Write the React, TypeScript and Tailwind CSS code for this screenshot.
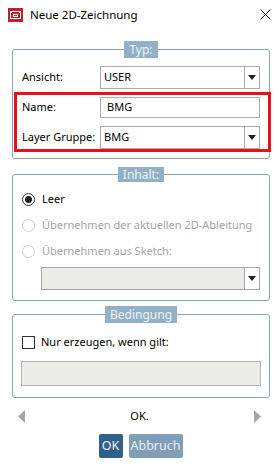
import { ReactNode } from "react";

function Caret() {
  return (
    <svg width="8" height="5" viewBox="0 0 8 5" className="block">
      <path d="M0 0h8L4 5z" fill="#222" />
    </svg>
  );
}

function Select({ value, width = "w-[160px]", disabled = false }: { value?: string; width?: string; disabled?: boolean }) {
  return (
    <div
      className={`flex h-[23px] shrink-0 ${width} border ${
        disabled ? "border-[#a6a6a6] bg-[#ecede8]" : "border-[#acacac] bg-white"
      }`}
    >
      <div className="flex flex-1 items-center pl-[3px] text-black">{value}</div>
      <div className={`flex w-[15px] items-center justify-center border-l ${disabled ? "border-[#a6a6a6] bg-white" : "border-[#acacac]"}`}>
        <Caret />
      </div>
    </div>
  );
}

function Group({ title, legendH = "h-[17px]", children }: { title: string; legendH?: string; children: ReactNode }) {
  return (
    <fieldset className="ml-[12px] w-[258px] rounded-[3px] border border-[#8aa5b9]">
      <legend className={`mx-auto flex ${legendH} items-center bg-[#93b0c6] px-[5px] text-[12px] leading-none text-[#eef3f7]`}>
        {title}
      </legend>
      {children}
    </fieldset>
  );
}

function Radio({ label, checked = false, disabled = false }: { label: string; checked?: boolean; disabled?: boolean }) {
  return (
    <div className="flex h-[26px] items-center pl-[9px]">
      <span
        className={`flex h-[13px] w-[13px] shrink-0 items-center justify-center rounded-full border ${
          disabled ? "border-[#cfcfcf]" : "border-[#333]"
        }`}
      >
        {checked && <span className="h-[7px] w-[7px] rounded-full bg-[#222]" />}
      </span>
      <span className={`ml-[7px] ${disabled ? "text-[#a3a3a3]" : "text-black"}`}>{label}</span>
    </div>
  );
}

export default function App() {
  return (
    <div className="h-[472px] w-[279px] overflow-hidden whitespace-nowrap bg-white font-['Noto_Sans',sans-serif] text-[11px] text-black">
      {/* title bar */}
      <div className="flex h-[41px] items-start pt-[8px]">
        <svg width="15" height="14" viewBox="0 0 15 14" className="ml-[8px] block">
          <rect width="15" height="14" fill="#c4202b" />
          <rect x="2.5" y="3.5" width="10" height="7" fill="none" stroke="#fff" />
          <path d="M2 3h2v2H2zM11 3h2v2h-2zM5 6h5v3H5z" fill="#fff" />
          <path d="M6 7h3v1H6z" fill="#c4202b" />
        </svg>
        <span className="ml-[7px] text-[11.5px] leading-[14px] text-black">Neue 2D-Zeichnung</span>
        <svg width="11" height="11" viewBox="0 0 11 11" className="ml-auto mr-[8px] mt-[1px] block">
          <path d="M0.5 0.5l10 10M10.5 0.5l-10 10" stroke="#111" strokeWidth="1" />
        </svg>
      </div>

      <Group title="Typ:">
        <div className="flex items-center pl-[9px] pt-[8px]">
          <span className="w-[78px] shrink-0">Ansicht:</span>
          <Select value="USER" />
        </div>
        <div className="ml-[1px] mr-[-2px] mt-[3px] border-[3px] border-[#e8101a] pl-[5px] pt-[2px]">
          <div className="flex items-center">
            <span className="w-[78px] shrink-0">Name:</span>
            <div className="flex h-[21px] w-[160px] shrink-0 items-center border border-[#acacac] pl-[6px]">BMG</div>
          </div>
          <div className="mt-[8px] flex items-center">
            <span className="w-[78px] shrink-0">Layer Gruppe:</span>
            <Select value="BMG" />
          </div>
        </div>
        <div className="h-[6px]" />
      </Group>

      <div className="mt-[8px]">
        <Group title="Inhalt:" legendH="h-[15px]">
          <div className="pt-[4px]">
            <Radio label="Leer" checked />
            <Radio label="Übernehmen der aktuellen 2D-Ableitung" disabled />
            <Radio label="Übernehmen aus Sketch:" disabled />
          </div>
          <div className="ml-[28px] mt-[3px] pb-[10px]">
            <Select width="w-[219px]" disabled />
          </div>
        </Group>
      </div>

      <div className="mt-[5px]">
        <Group title="Bedingung">
          <div className="mt-[6px] flex h-[26px] items-center pl-[9px]">
            <span className="h-[13px] w-[13px] shrink-0 border border-[#333]" />
            <span className="ml-[6px]">Nur erzeugen, wenn gilt:</span>
          </div>
          <div className="mb-[11px] ml-[8px] mt-[6px] h-[25px] w-[240px] border border-[#b4b4b4] bg-[#ecede8]" />
        </Group>
      </div>

      {/* message navigation */}
      <div className="mt-[11px] flex h-[15px] items-center px-[18px]">
        <svg width="7" height="13" viewBox="0 0 7 13" className="block">
          <path d="M7 0v13L0 6.5z" fill="#a5a5a5" />
        </svg>
        <span className="flex-1 text-center">OK.</span>
        <svg width="7" height="13" viewBox="0 0 7 13" className="block">
          <path d="M0 0v13l7-6.5z" fill="#a5a5a5" />
        </svg>
      </div>

      <div className="mt-[10px] flex justify-center gap-[6px] pl-[2px]">
        <button className="flex h-[24px] w-[24px] shrink-0 items-center justify-center rounded-[2px] bg-[#2f6189] text-[12.5px] text-[#e8eff4]">
          OK
        </button>
        <button className="flex h-[24px] w-[54px] shrink-0 items-center justify-center rounded-[2px] bg-[#7f9fb6] text-[12.5px] text-[#e8eff4]">
          Abbruch
        </button>
      </div>
    </div>
  );
}
